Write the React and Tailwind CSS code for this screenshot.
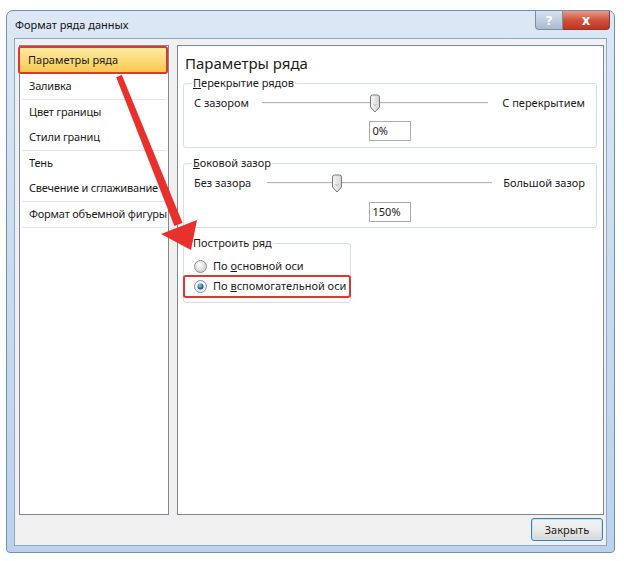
import React from 'react'

const menu = [
  ['Заливка'],
  ['Цвет границы', 'Стили границ'],
  ['Тень', 'Свечение и сглаживание'],
  ['Формат объемной фигуры'],
]

const Thumb = ({ left }) => (
  <svg
    className="absolute top-[-9px]"
    style={{ left: left - 6 }}
    width="12"
    height="19"
    viewBox="0 0 12 19"
  >
    <defs>
      <linearGradient id="thumbFill" x1="0" y1="0" x2="1" y2="0">
        <stop offset="0" stopColor="#f6f6f6" />
        <stop offset="1" stopColor="#d4d4d4" />
      </linearGradient>
    </defs>
    <path
      d="M1.5 3 Q1.5 1 3.5 1 H8.5 Q10.5 1 10.5 3 V13 L6 18 L1.5 13 Z"
      fill="url(#thumbFill)"
      stroke="#7a7a7a"
    />
    <path d="M4.5 10 L6 12 L7.5 10" fill="none" stroke="#bdbdbd" />
  </svg>
)

const SliderRow = ({ left, right, labelClass, trackClass, thumb }) => (
  <div className="flex items-center h-[18px] whitespace-nowrap">
    <span className={labelClass}>{left}</span>
    <div className={`relative h-[2px] border-t border-[#b4b4b4] border-b border-b-[#f4f4f4] ${trackClass}`}>
      <Thumb left={thumb} />
    </div>
    <span className="flex-1 text-right">{right}</span>
  </div>
)

const Radio = ({ checked }) => (
  <svg width="13" height="13" viewBox="0 0 13 13" className="shrink-0">
    <defs>
      <radialGradient id={checked ? 'rOn' : 'rOff'} cx="0.4" cy="0.35" r="0.7">
        <stop offset="0" stopColor="#ffffff" />
        <stop offset="1" stopColor={checked ? '#d8e6f2' : '#c9c9c9'} />
      </radialGradient>
      <radialGradient id="dot" cx="0.4" cy="0.35" r="0.6">
        <stop offset="0" stopColor="#8fd0f5" />
        <stop offset="1" stopColor="#17466c" />
      </radialGradient>
    </defs>
    <circle cx="6.5" cy="6.5" r="6" fill={`url(#${checked ? 'rOn' : 'rOff'})`} stroke="#8e8f8f" />
    {checked && <circle cx="6.5" cy="6.5" r="3" fill="url(#dot)" />}
  </svg>
)

export default function App() {
  return (
    <div className="relative w-[624px] h-[561px] bg-white pt-[10px] pl-[6px] overflow-hidden font-['Noto_Sans','Open_Sans',sans-serif] text-[11px] text-[#1b1b1b]">
      {/* Window */}
      <div className="w-[609px] h-[543px] flex flex-col rounded-t-[7px] rounded-b-[4px] border border-[#6f8fb5] bg-gradient-to-b from-[#dce8f5] via-[#c9dbef] to-[#bcd2ec]">
        {/* Title bar */}
        <div className="h-[27px] flex items-start">
          <span className="ml-[8px] mt-[6px] leading-[16px] text-[#111]">Формат ряда данных</span>
          <div className="ml-auto mr-[4px] flex">
            <div className="w-[28px] h-[19px] rounded-bl-[4px] border border-t-0 border-[#7b8ea6] bg-gradient-to-b from-[#d8e2ee] to-[#a9bbd1] flex items-center justify-center text-white font-bold text-[13px] leading-none">
              ?
            </div>
            <div className="w-[47px] h-[19px] rounded-br-[4px] border border-l-0 border-t-0 border-[#8a3a2e] bg-gradient-to-b from-[#e99a88] via-[#d0513b] to-[#c2331e] flex items-center justify-center text-white font-bold text-[14px] leading-none">
              x
            </div>
          </div>
        </div>

        {/* Client area */}
        <div className="mx-[7px] h-[508px] border border-[#8ba8cd] bg-[#f0f0f0] pt-[6px] pl-[4px] pr-[2px] pb-[4px] flex flex-col">
          <div className="flex h-[470px] gap-[8px]">
            {/* Left list */}
            <div className="w-[150px] border border-[#828790] bg-white whitespace-nowrap">
              <div className="h-[28px] -ml-[2px] border-2 border-[#e2352f] rounded-[3px] bg-gradient-to-b from-[#fdeaa0] to-[#f9c94e] flex items-center pl-[8px]">
                Параметры ряда
              </div>
              {menu.map((group, i) => (
                <div key={i} className="mx-[2px] border-b border-[#e3e3e3] tracking-[-0.2px]">
                  {group.map((item) => (
                    <div key={item} className="h-[25px] flex items-center pl-[7px]">
                      {item}
                    </div>
                  ))}
                </div>
              ))}
            </div>

            {/* Right panel */}
            <div className="flex-1 border border-[#828790] bg-white pl-[5px] pr-[6px]">
              <div className="pl-[2px] pt-[6px] h-[29px] text-[15px] leading-[22px]">Параметры ряда</div>

              <fieldset className="border border-[#d5dfe5] rounded-[3px] pl-[10px] pr-[11px] pb-[6px]">
                <legend className="-ml-[2px] px-[1px] leading-[16px]">
                  <u>П</u>ерекрытие рядов
                </legend>
                <div className="mt-[3px]">
                  <SliderRow
                    left="С зазором"
                    right="С перекрытием"
                    labelClass="w-[68px]"
                    trackClass="w-[226px]"
                    thumb={113}
                  />
                </div>
                <div className="mx-auto mt-[9px] w-[42px] h-[20px] border border-[#abadb3] flex items-center pl-[3px]">
                  0%
                </div>
              </fieldset>

              <fieldset className="mt-[7px] border border-[#d5dfe5] rounded-[3px] pl-[10px] pr-[11px] pb-[5px]">
                <legend className="-ml-[2px] px-[1px] leading-[16px]">
                  <u>Б</u>оковой зазор
                </legend>
                <div className="mt-[3px]">
                  <SliderRow
                    left="Без зазора"
                    right="Большой зазор"
                    labelClass="w-[73px]"
                    trackClass="w-[225px]"
                    thumb={70}
                  />
                </div>
                <div className="mx-auto mt-[10px] w-[42px] h-[20px] border border-[#abadb3] flex items-center pl-[3px]">
                  150%
                </div>
              </fieldset>

              <fieldset className="mt-[7px] w-[168px] border border-[#d5dfe5] rounded-[3px] pl-[10px] pr-[10px] pb-[4px] whitespace-nowrap">
                <legend className="-ml-[2px] px-[1px] leading-[16px]">Построить ряд</legend>
                <div className="mt-[6px] h-[18px] flex items-center gap-[6px]">
                  <Radio />
                  <span>
                    По <u>о</u>сновной оси
                  </span>
                </div>
                <div className="-mx-[11px] h-[23px] border-2 border-[#e2352f] rounded-[3px] pl-[9px] flex items-center gap-[6px]">
                  <Radio checked />
                  <span>
                    По <u>в</u>спомогательной оси
                  </span>
                </div>
              </fieldset>
            </div>
          </div>

          <div className="mt-[3px] flex justify-end pr-[1px]">
            <button className="w-[72px] h-[23px] rounded-[3px] border border-[#3c7fb1] bg-gradient-to-b from-[#f2f2f2] via-[#ebebeb] to-[#d6d6d6] shadow-[inset_0_0_0_1px_#c2e4f6] leading-none">
              Закрыть
            </button>
          </div>
        </div>
      </div>

      {/* Annotation arrow */}
      <svg className="absolute left-0 top-0 pointer-events-none" width="624" height="561">
        <polygon points="121.8,74.8 116.2,77.2 174.4,226 182.6,223" fill="#e8312c" />
        <polygon points="197,220 161,234 191,250" fill="#e8312c" />
      </svg>
    </div>
  )
}
